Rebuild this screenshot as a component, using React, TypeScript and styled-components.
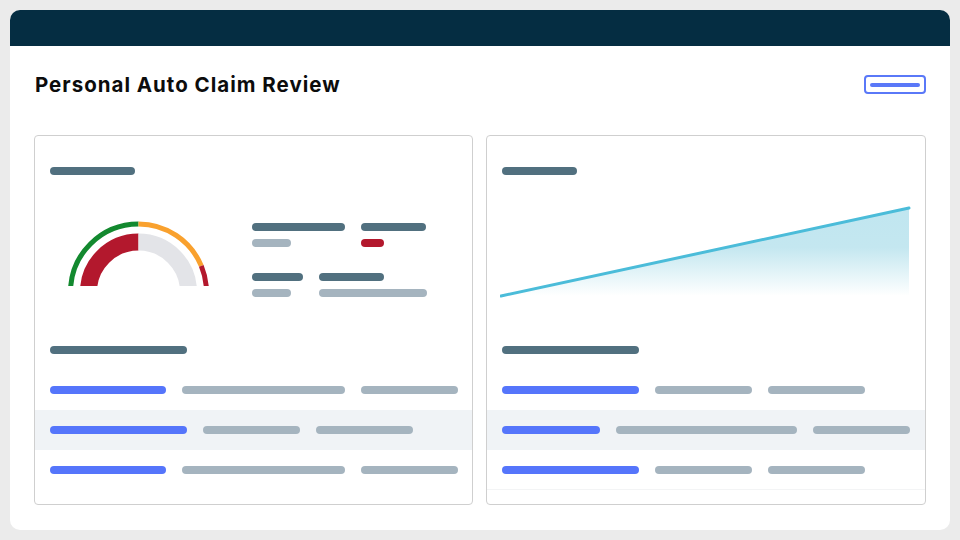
import React from 'react';
import styled, { createGlobalStyle } from 'styled-components';

const GlobalStyle = createGlobalStyle`
  html, body {
    margin: 0;
    padding: 0;
    background: #ebebeb;
    font-family: "Inter", "Liberation Sans", sans-serif;
  }
`;

const Page = styled.div`
  width: 960px;
  height: 540px;
  padding: 10px;
  box-sizing: border-box;
`;

const Card = styled.div`
  width: 940px;
  height: 520px;
  background: #ffffff;
  border-radius: 10px;
  overflow: hidden;
  display: flex;
  flex-direction: column;
`;

const TopBar = styled.div`
  height: 36px;
  background: #052d42;
  flex: none;
`;

const Body = styled.div`
  padding: 0 24px;
`;

const TitleRow = styled.div`
  height: 76px;
  margin-bottom: 13px;
  display: flex;
  align-items: center;
  justify-content: space-between;
`;

const Title = styled.h1`
  margin: 0 0 0 1px;
  font-size: 20.5px;
  font-weight: 700;
  color: #0c0c0c;
  letter-spacing: 1px;
`;

const OutlineButton = styled.button`
  width: 62px;
  height: 19px;
  margin-top: 1px;
  padding: 0;
  border: 2px solid #5a78f8;
  border-radius: 4px;
  background: #ffffff;
  display: flex;
  align-items: center;
  justify-content: center;
`;

const Panels = styled.div`
  display: grid;
  grid-template-columns: 439px 440px;
  gap: 13px;
  height: 370px;
`;

const Panel = styled.section`
  border: 1px solid #cfcfcf;
  border-radius: 4px;
  display: flex;
  flex-direction: column;
  overflow: hidden;
`;

const TopSection = styled.div`
  height: 210px;
  padding: 31px 15px 0;
  box-sizing: border-box;
`;

type Tone = 'dark' | 'light' | 'blue' | 'red' | 'accent';

const toneColor: Record<Tone, string> = {
  dark: '#51707f',
  light: '#a5b4bf',
  blue: '#5575fb',
  red: '#b3182d',
  accent: '#5a78f8',
};

const Bar = styled.div<{ $w: number; $tone: Tone; $h?: number }>`
  width: ${p => p.$w}px;
  height: ${p => p.$h ?? 8}px;
  border-radius: 4px;
  background: ${p => toneColor[p.$tone]};
  flex: none;
`;

const GaugeRow = styled.div`
  margin-top: 46px;
  display: flex;
  align-items: flex-start;
`;

const GaugeSvg = styled.svg`
  margin-left: 18px;
  flex: none;
  display: block;
`;

const Stats = styled.div`
  margin-left: 42px;
  margin-top: 2px;
  display: flex;
  flex-direction: column;
  gap: 26px;
`;

const StatGroup = styled.div`
  display: flex;
  gap: 16px;
`;

const Stat = styled.div`
  display: flex;
  flex-direction: column;
  gap: 8px;
`;

const ChartSvg = styled.svg`
  display: block;
  margin: 30px 0 0 -2px;
`;

const ListHead = styled.div`
  padding: 0 15px;
  margin-bottom: 16px;
`;

const Row = styled.div<{ $alt?: boolean; $line?: boolean }>`
  height: 40px;
  padding: 0 15px;
  display: flex;
  align-items: center;
  gap: 16px;
  background: ${p => (p.$alt ? '#f0f3f6' : 'transparent')};
  box-sizing: border-box;
  border-bottom: 1px solid ${p => (p.$line ? '#f3f4f5' : 'transparent')};
`;

const cx = 70.5;
const cy = 71;
const pt = (r: number, deg: number) => {
  const a = (deg * Math.PI) / 180;
  return `${cx + r * Math.cos(a)} ${cy - r * Math.sin(a)}`;
};
const arc = (r: number, from: number, to: number) =>
  `M ${pt(r, from)} A ${r} ${r} 0 0 1 ${pt(r, to)}`;

function Gauge() {
  return (
    <GaugeSvg width="142" height="65" viewBox="0 0 142 65">
      <path d={arc(68, 180, 90)} stroke="#13892f" strokeWidth="5" fill="none" />
      <path d={arc(68, 90, 22.6)} stroke="#f9a12e" strokeWidth="5" fill="none" />
      <path d={arc(68, 22.6, 0)} stroke="#b3182d" strokeWidth="5" fill="none" />
      <path d={arc(50, 180, 90)} stroke="#b3182d" strokeWidth="17" fill="none" />
      <path d={arc(50, 90, 0)} stroke="#e3e4e8" strokeWidth="17" fill="none" />
    </GaugeSvg>
  );
}

function TrendChart() {
  return (
    <ChartSvg width="412" height="94" viewBox="0 0 412 94">
      <defs>
        <linearGradient id="trendFill" x1="0" y1="0" x2="0" y2="1" gradientUnits="objectBoundingBox">
          <stop offset="0" stopColor="#c0e6f0" />
          <stop offset="0.45" stopColor="#c4e7f0" />
          <stop offset="1" stopColor="#ffffff" />
        </linearGradient>
      </defs>
      <polygon points="1,91 409,3 409,90" fill="url(#trendFill)" />
      <line x1="1" y1="91" x2="409" y2="3" stroke="#4bbcd9" strokeWidth="3" strokeLinecap="round" />
    </ChartSvg>
  );
}

type RowSpec = [number, number, number];

function List({ rows, lastLine }: { rows: RowSpec[]; lastLine?: boolean }) {
  return (
    <>
      <ListHead>
        <Bar $w={137} $tone="dark" />
      </ListHead>
      {rows.map((r, i) => (
        <Row key={i} $alt={i === 1} $line={lastLine && i === rows.length - 1}>
          <Bar $w={r[0]} $tone="blue" />
          <Bar $w={r[1]} $tone="light" />
          <Bar $w={r[2]} $tone="light" />
        </Row>
      ))}
    </>
  );
}

export default function App() {
  return (
    <>
      <GlobalStyle />
      <Page>
        <Card>
          <TopBar />
          <Body>
            <TitleRow>
              <Title>Personal Auto Claim Review</Title>
              <OutlineButton aria-label="action">
                <Bar $w={50} $h={4} $tone="accent" />
              </OutlineButton>
            </TitleRow>
            <Panels>
              <Panel>
                <TopSection>
                  <Bar $w={85} $tone="dark" />
                  <GaugeRow>
                    <Gauge />
                    <Stats>
                      <StatGroup>
                        <Stat>
                          <Bar $w={93} $tone="dark" />
                          <Bar $w={39} $tone="light" />
                        </Stat>
                        <Stat>
                          <Bar $w={65} $tone="dark" />
                          <Bar $w={23} $tone="red" />
                        </Stat>
                      </StatGroup>
                      <StatGroup>
                        <Stat>
                          <Bar $w={51} $tone="dark" />
                          <Bar $w={39} $tone="light" />
                        </Stat>
                        <Stat>
                          <Bar $w={65} $tone="dark" />
                          <Bar $w={108} $tone="light" />
                        </Stat>
                      </StatGroup>
                    </Stats>
                  </GaugeRow>
                </TopSection>
                <List rows={[[116, 163, 97], [137, 97, 97], [116, 163, 97]]} />
              </Panel>
              <Panel>
                <TopSection>
                  <Bar $w={75} $tone="dark" />
                  <TrendChart />
                </TopSection>
                <List rows={[[137, 97, 97], [98, 181, 97], [137, 97, 97]]} lastLine />
              </Panel>
            </Panels>
          </Body>
        </Card>
      </Page>
    </>
  );
}
